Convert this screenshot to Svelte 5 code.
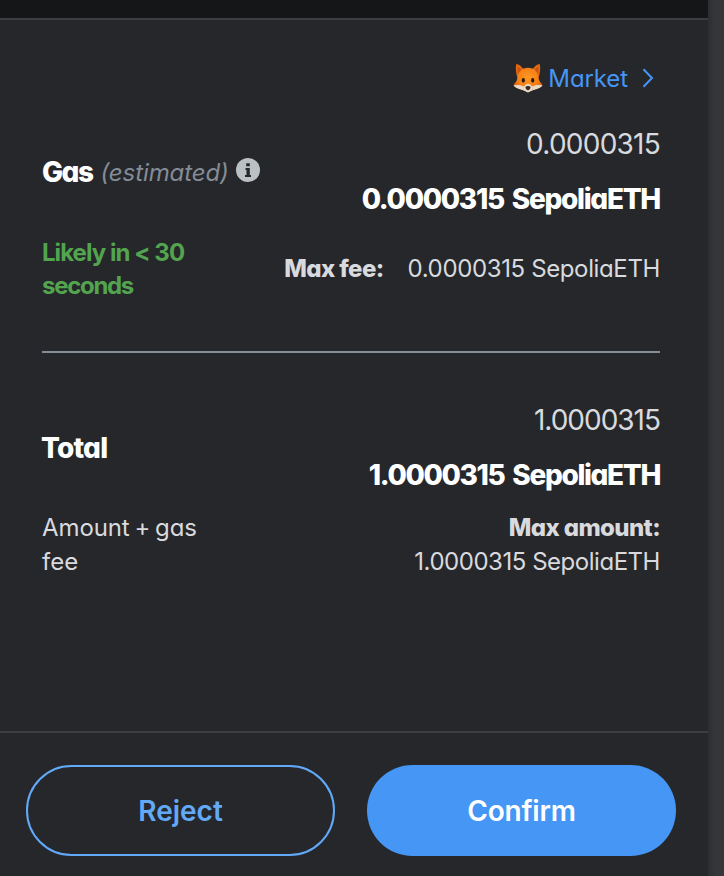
<script>
  const gas = '0.0000315';
  const total = '1.0000315';
  const symbol = 'SepoliaETH';
</script>

<div class="screen">
  <main class="panel">
    <div class="top"></div>
    <section class="content">
      <button class="market">
        <svg class="fox" viewBox="0 0 32 32" aria-hidden="true">
          <defs>
            <radialGradient id="fur" cx=".5" cy=".4" r=".65">
              <stop offset="0" stop-color="#ff9822" />
              <stop offset=".65" stop-color="#f47c16" />
              <stop offset="1" stop-color="#c9470c" />
            </radialGradient>
          </defs>
          <path fill="#e56a12" d="M3.500 1C7 1 10 5 12 8L5 16C3 11 2.500 6 3.500 1zM28.500 1C25 1 22 5 20 8l7 8c2-5 2.500-10 1.500-15z" />
          <path fill="#c9540f" d="M5 4c2 .5 4 3 5 5l-4 4C5 11 4.500 8 5 4zm22 0c-2 .5-4 3-5 5l4 4c1-3 1.500-6 1-9z" />
          <path fill="url(#fur)" d="M16 5c7 0 11 5 11.500 12 .3 3 3.500 4.500 4 6.500-4 4-9.500 5-15.500 7-6-2-11.500-3-15.500-7 .5-2 3.700-3.500 4-6.500C5 10 9 5 16 5z" />
          <path fill="#eadbc5" d="M.5 24c4-1 7.500-.5 10.500 1 2-1 3-3 5-3s3 2 5 3c3-1.500 6.500-2 10.500-1-3 4-9.500 4-15.500 7.500C10 28 3.500 28 .5 24z" />
          <ellipse cx="11" cy="18.500" rx="1.700" ry="2.500" fill="#29180f" />
          <ellipse cx="21" cy="18.500" rx="1.700" ry="2.500" fill="#29180f" />
          <path fill="#3a2925" d="M13.300 25.500c1-1.200 4.400-1.200 5.400 0 0 2-1.400 3.500-2.700 3.500s-2.700-1.500-2.700-3.500z" />
        </svg>
        <span class="market-label">Market</span>
        <svg class="chevron" viewBox="0 0 12 20" aria-hidden="true"><path d="M1.500 1.200 10 10l-8.500 8.800" /></svg>
      </button>

      <div class="row">
        <h2><span class="gas">Gas</span> <em>(estimated)</em>
          <svg class="info" viewBox="0 0 24 24" aria-hidden="true"><circle cx="12" cy="12" r="12" fill="#bbc0c5" /><path fill="#26272b" d="M10.200 5.200h3.600v3h-3.600zM9.500 10h4.300v7H15v2H9v-2h1.500v-5h-1z" /></svg>
        </h2>
        <div class="values">
          <span class="plain">{gas}</span>
          <strong class="gas-total">{gas} {symbol}</strong>
        </div>
      </div>

      <div class="details fee">
        <div class="likely">Likely in &lt; 30<br /><span>seconds</span></div>
        <div class="max-fee"><b>Max fee:</b><span class="small">{gas} {symbol}</span></div>
      </div>

      <hr />

      <div class="row">
        <h2><span class="total">Total</span></h2>
        <div class="values">
          <span class="plain total-plain">{total}</span>
          <strong class="sum">{total} {symbol}</strong>
        </div>
      </div>

      <div class="details amount">
        <div class="left">Amount + gas<br /><span>fee</span></div>
        <div class="max-amount"><b>Max amount:</b><span class="small one">{total} {symbol}</span></div>
      </div>
    </section>

    <footer>
      <button class="action reject">Reject</button>
      <button class="action confirm">Confirm</button>
    </footer>
  </main>
  <div class="gutter"></div>
</div>

<style>
  .screen {
    display: flex;
    width: 724px;
    height: 876px;
    overflow: hidden;
    background: #26272b;
    color: #d8dade;
    font-family: Inter, "Liberation Sans", sans-serif;
    font-feature-settings: "cv11" 1;
    font-size: 24px;
    font-weight: 430;
    white-space: nowrap;
  }
  .panel { display: flex; flex-direction: column; width: 708px; }
  .gutter { flex: 1; background: linear-gradient(90deg, #2d2e32, #35363a 7px); }
  .top { height: 18px; background: #151618; border-bottom: 2px solid #3b3d41; }
  .content { flex: 1; padding: 38px 48px 0 42px; }
  button { font: inherit; font-feature-settings: inherit; border: 0; background: none; padding: 0; }
  .market { display: flex; align-items: center; width: 100%; height: 40px; justify-content: flex-end; color: #4596f5; padding-right: 6px; }
  .fox { width: 32px; height: 30px; margin-right: 4px; }
  .market-label { letter-spacing: -.1px; }
  .chevron { width: 12px; height: 20px; margin-left: 14px; fill: none; stroke: #4596f5; stroke-width: 2; }
  .row { display: flex; justify-content: space-between; align-items: center; height: 110px; margin-top: 19px; }
  h2 { display: flex; align-items: center; margin: 0; font-size: 28px; font-weight: 800; color: #fff; }
  .gas { letter-spacing: -1.5px; }
  .total { letter-spacing: -.8px; margin-left: -1px; }
  em { margin-left: 8px; font-size: 24px; font-weight: 430; letter-spacing: -.1px; color: #848c96; }
  .info { width: 24px; height: 24px; margin: 0 0 4px 7px; }
  .values { display: flex; flex-direction: column; align-items: flex-end; line-height: 55px; font-size: 28px; padding-right: 0; }
  .plain { letter-spacing: -.75px; }
  .total-plain { letter-spacing: -1px; }
  .values strong { color: #fff; font-weight: 800; letter-spacing: -1.3px; word-spacing: 3px; }
  .values .sum { letter-spacing: -1.35px; }
  .details { display: flex; justify-content: space-between; align-items: center; }
  .fee { margin-top: 9px; height: 66px; line-height: 33px; }
  .likely { color: #52a44e; font-weight: 750; letter-spacing: -.95px; }
  .likely span { letter-spacing: -1.3px; }
  .max-fee { display: flex; gap: 24px; margin-bottom: 2px; }
  .small { letter-spacing: -.37px; }
  .one { letter-spacing: -.47px; }
  hr { height: 2px; margin: 49px 0 0; border: 0; background: #848c96; }
  hr + .row { margin-top: 40px; }
  .amount { margin-top: 8px; height: 68px; line-height: 34px; }
  .left { letter-spacing: -.1px; word-spacing: -1.8px; }
  .left span { letter-spacing: 0; }
  .max-amount { display: flex; flex-direction: column; align-items: flex-end; }
  b { font-weight: 800; letter-spacing: -.62px; }
  footer { display: flex; gap: 32px; height: 145px; padding: 32px 32px 0 26px; border-top: 2px solid #3b3d41; box-sizing: border-box; }
  .action { width: 309px; height: 91px; box-sizing: border-box; border-radius: 46px; font-size: 28px; font-weight: 600; }
  .reject { border: 2px solid #62a9f8; color: #62a9f8; }
  .confirm { background: #4596f5; color: #fff; letter-spacing: -.2px; }
</style>
